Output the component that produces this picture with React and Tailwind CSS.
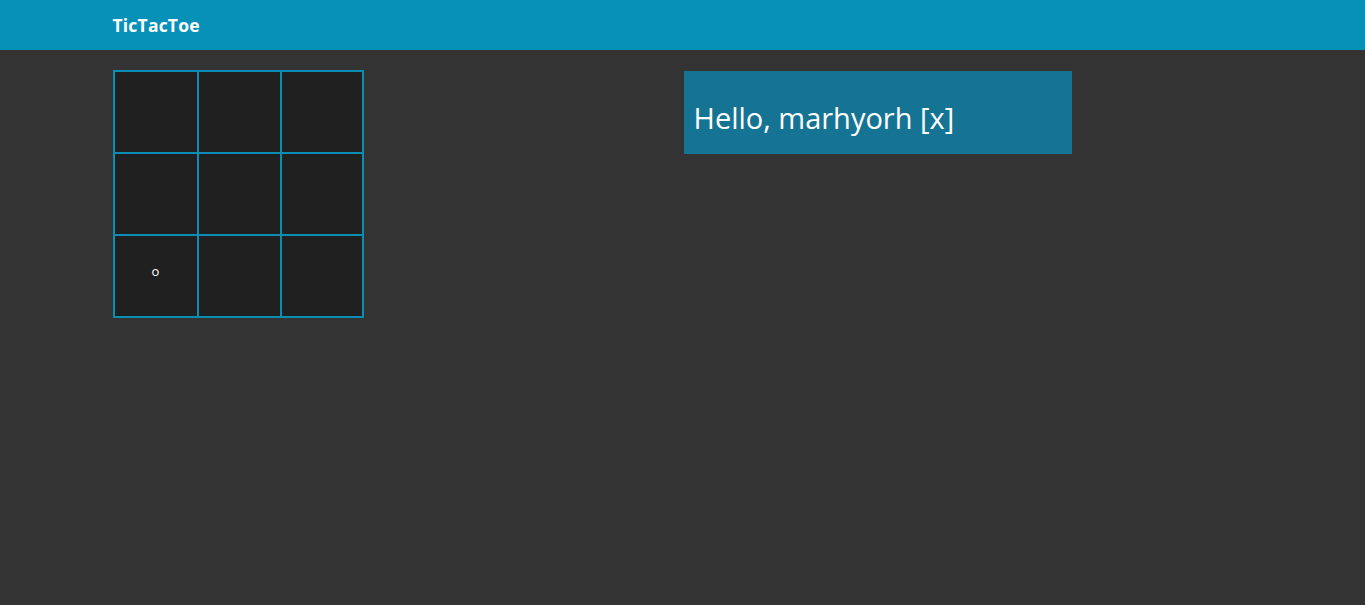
import React from 'react'

const board = ['', '', '', '', '', '', 'o', '', '']

const App = () => {
    return (
        <div className="min-h-[605px] bg-[#333333] font-['Open_Sans',sans-serif] text-white">
            {/* Navbar */}
            <nav className="h-[50px] bg-[#0891b8] flex items-center">
                <div className="w-[1140px] mx-auto">
                    <span className="text-[17.5px] font-bold tracking-[0.2px]">TicTacToe</span>
                </div>
            </nav>

            <div className="w-[1140px] mx-auto flex pt-[20px]">
                {/* Board */}
                <div className="w-[571px]">
                    <div className="grid grid-cols-[82px_81px_80px] gap-[2px] p-[2px] bg-[#0c8db4] w-fit">
                        {board.map((cell, i) => (
                            <div key={i} className="h-[80px] bg-[#202020] flex items-center justify-center text-[13px] leading-none pb-[10px]">
                                {cell}
                            </div>
                        ))}
                    </div>
                </div>

                {/* Greeting */}
                <div className="pt-px">
                    <div className="w-[388px] h-[83px] bg-[#157494] flex items-end px-[10px] pb-[22px]">
                        <h1 className="text-[29px] leading-none">Hello, marhyorh [x]</h1>
                    </div>
                </div>
            </div>
        </div>
    )
}

export default App
